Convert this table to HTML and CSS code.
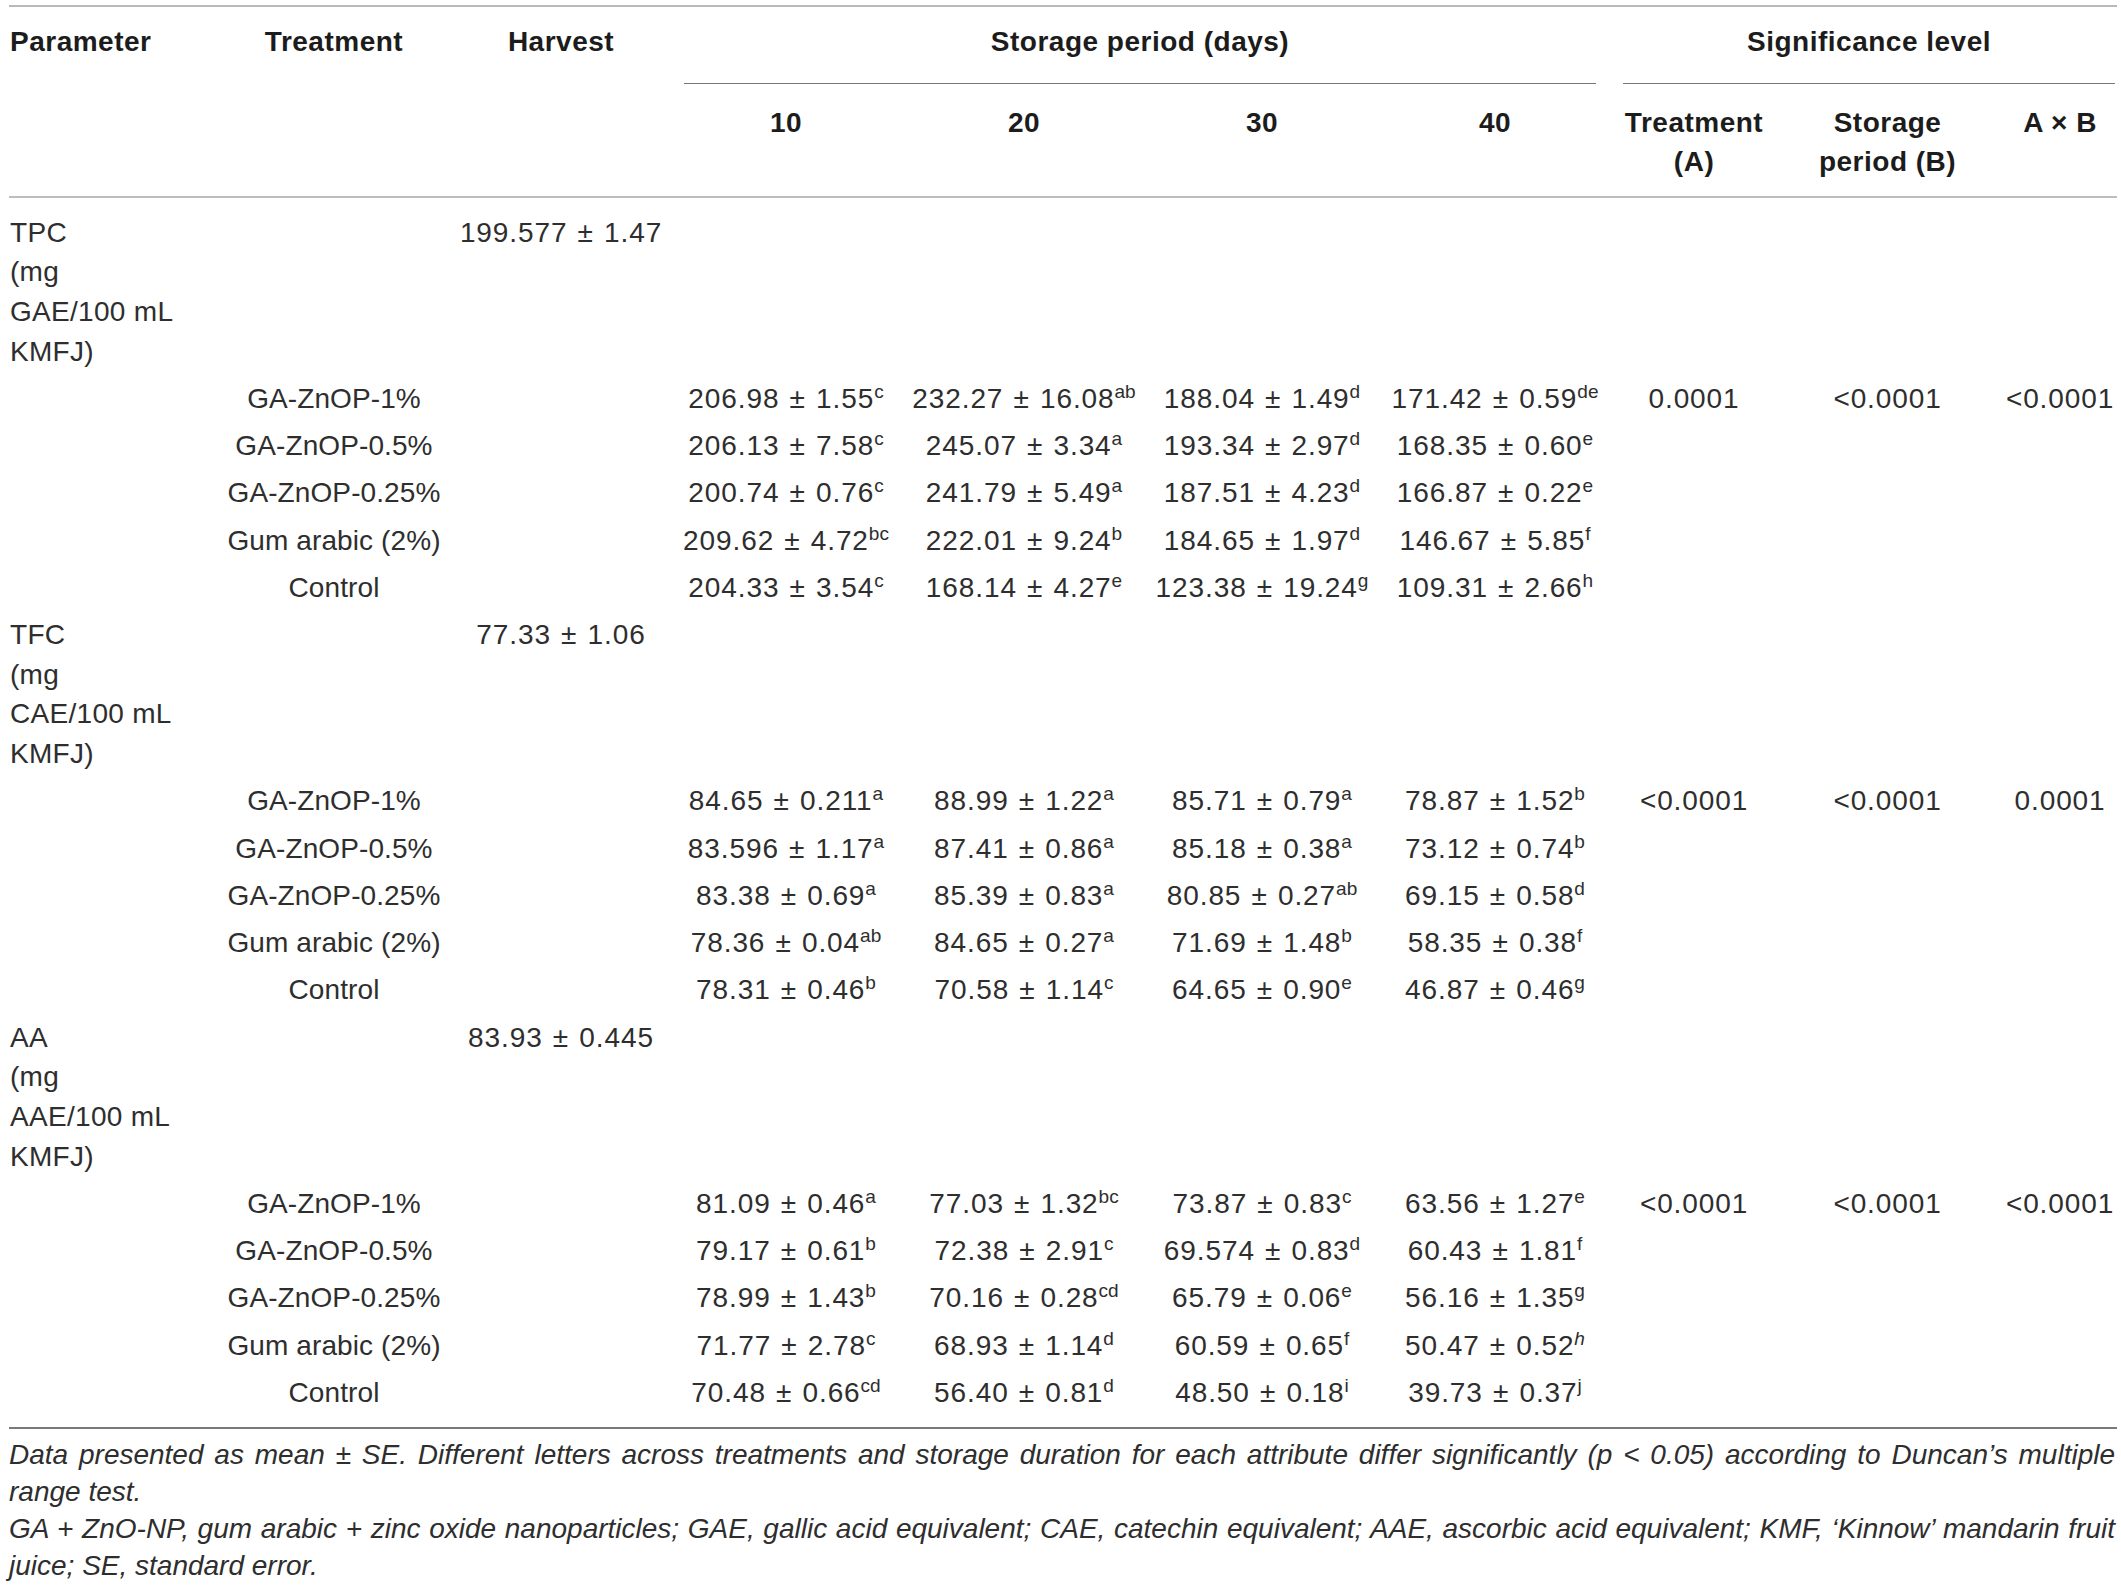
FILE: index.html
```html
<!DOCTYPE html>
<html lang="en">
<head>
    <meta charset="UTF-8">
    <meta name="viewport" content="width=device-width, initial-scale=1.0">
    <title>Phenolics, flavonoids and ascorbic acid during storage</title>
    <link rel="stylesheet" href="styles.css">
</head>
<body>
    <div class="wrap">
        <table class="data">
            <colgroup>
                <col class="c-param">
                <col class="c-treat">
                <col class="c-harvest">
                <col class="c-d10">
                <col class="c-d20">
                <col class="c-d30">
                <col class="c-d40">
                <col class="c-sa">
                <col class="c-sb">
                <col class="c-sab">
            </colgroup>
            <thead>
                <tr class="head-top">
                    <th rowspan="2" class="rs left">Parameter</th>
                    <th rowspan="2" class="rs">Treatment</th>
                    <th rowspan="2" class="rs">Harvest</th>
                    <th colspan="4" class="group"><div class="group-label storage">Storage period (days)</div></th>
                    <th colspan="3" class="group"><div class="group-label sig">Significance level</div></th>
                </tr>
                <tr class="head-sub">
                    <th>10</th>
                    <th>20</th>
                    <th>30</th>
                    <th>40</th>
                    <th>Treatment<br>(A)</th>
                    <th>Storage<br>period (B)</th>
                    <th>A &times; B</th>
                </tr>
            </thead>
            <tbody>
                <!-- TPC -->
                <tr>
                    <td class="param">TPC<br>(mg<br>GAE/100 mL<br>KMFJ)</td>
                    <td></td>
                    <td>199.577 &plusmn; 1.47</td>
                    <td></td><td></td><td></td><td></td><td></td><td></td><td></td>
                </tr>
                <tr>
                    <td></td>
                    <td class="treat">GA-ZnOP-1%</td>
                    <td></td>
                    <td>206.98 &plusmn; 1.55<sup>c</sup></td>
                    <td>232.27 &plusmn; 16.08<sup>ab</sup></td>
                    <td>188.04 &plusmn; 1.49<sup>d</sup></td>
                    <td>171.42 &plusmn; 0.59<sup>de</sup></td>
                    <td>0.0001</td>
                    <td>&lt;0.0001</td>
                    <td>&lt;0.0001</td>
                </tr>
                <tr>
                    <td></td>
                    <td class="treat">GA-ZnOP-0.5%</td>
                    <td></td>
                    <td>206.13 &plusmn; 7.58<sup>c</sup></td>
                    <td>245.07 &plusmn; 3.34<sup>a</sup></td>
                    <td>193.34 &plusmn; 2.97<sup>d</sup></td>
                    <td>168.35 &plusmn; 0.60<sup>e</sup></td>
                    <td></td><td></td><td></td>
                </tr>
                <tr>
                    <td></td>
                    <td class="treat">GA-ZnOP-0.25%</td>
                    <td></td>
                    <td>200.74 &plusmn; 0.76<sup>c</sup></td>
                    <td>241.79 &plusmn; 5.49<sup>a</sup></td>
                    <td>187.51 &plusmn; 4.23<sup>d</sup></td>
                    <td>166.87 &plusmn; 0.22<sup>e</sup></td>
                    <td></td><td></td><td></td>
                </tr>
                <tr>
                    <td></td>
                    <td class="treat">Gum arabic (2%)</td>
                    <td></td>
                    <td>209.62 &plusmn; 4.72<sup>bc</sup></td>
                    <td>222.01 &plusmn; 9.24<sup>b</sup></td>
                    <td>184.65 &plusmn; 1.97<sup>d</sup></td>
                    <td>146.67 &plusmn; 5.85<sup>f</sup></td>
                    <td></td><td></td><td></td>
                </tr>
                <tr>
                    <td></td>
                    <td class="treat">Control</td>
                    <td></td>
                    <td>204.33 &plusmn; 3.54<sup>c</sup></td>
                    <td>168.14 &plusmn; 4.27<sup>e</sup></td>
                    <td>123.38 &plusmn; 19.24<sup>g</sup></td>
                    <td>109.31 &plusmn; 2.66<sup>h</sup></td>
                    <td></td><td></td><td></td>
                </tr>

                <!-- TFC -->
                <tr>
                    <td class="param">TFC<br>(mg<br>CAE/100 mL<br>KMFJ)</td>
                    <td></td>
                    <td>77.33 &plusmn; 1.06</td>
                    <td></td><td></td><td></td><td></td><td></td><td></td><td></td>
                </tr>
                <tr>
                    <td></td>
                    <td class="treat">GA-ZnOP-1%</td>
                    <td></td>
                    <td>84.65 &plusmn; 0.211<sup>a</sup></td>
                    <td>88.99 &plusmn; 1.22<sup>a</sup></td>
                    <td>85.71 &plusmn; 0.79<sup>a</sup></td>
                    <td>78.87 &plusmn; 1.52<sup>b</sup></td>
                    <td>&lt;0.0001</td>
                    <td>&lt;0.0001</td>
                    <td>0.0001</td>
                </tr>
                <tr>
                    <td></td>
                    <td class="treat">GA-ZnOP-0.5%</td>
                    <td></td>
                    <td>83.596 &plusmn; 1.17<sup>a</sup></td>
                    <td>87.41 &plusmn; 0.86<sup>a</sup></td>
                    <td>85.18 &plusmn; 0.38<sup>a</sup></td>
                    <td>73.12 &plusmn; 0.74<sup>b</sup></td>
                    <td></td><td></td><td></td>
                </tr>
                <tr>
                    <td></td>
                    <td class="treat">GA-ZnOP-0.25%</td>
                    <td></td>
                    <td>83.38 &plusmn; 0.69<sup>a</sup></td>
                    <td>85.39 &plusmn; 0.83<sup>a</sup></td>
                    <td>80.85 &plusmn; 0.27<sup>ab</sup></td>
                    <td>69.15 &plusmn; 0.58<sup>d</sup></td>
                    <td></td><td></td><td></td>
                </tr>
                <tr>
                    <td></td>
                    <td class="treat">Gum arabic (2%)</td>
                    <td></td>
                    <td>78.36 &plusmn; 0.04<sup>ab</sup></td>
                    <td>84.65 &plusmn; 0.27<sup>a</sup></td>
                    <td>71.69 &plusmn; 1.48<sup>b</sup></td>
                    <td>58.35 &plusmn; 0.38<sup>f</sup></td>
                    <td></td><td></td><td></td>
                </tr>
                <tr>
                    <td></td>
                    <td class="treat">Control</td>
                    <td></td>
                    <td>78.31 &plusmn; 0.46<sup>b</sup></td>
                    <td>70.58 &plusmn; 1.14<sup>c</sup></td>
                    <td>64.65 &plusmn; 0.90<sup>e</sup></td>
                    <td>46.87 &plusmn; 0.46<sup>g</sup></td>
                    <td></td><td></td><td></td>
                </tr>

                <!-- AA -->
                <tr>
                    <td class="param">AA<br>(mg<br>AAE/100 mL<br>KMFJ)</td>
                    <td></td>
                    <td>83.93 &plusmn; 0.445</td>
                    <td></td><td></td><td></td><td></td><td></td><td></td><td></td>
                </tr>
                <tr>
                    <td></td>
                    <td class="treat">GA-ZnOP-1%</td>
                    <td></td>
                    <td>81.09 &plusmn; 0.46<sup>a</sup></td>
                    <td>77.03 &plusmn; 1.32<sup>bc</sup></td>
                    <td>73.87 &plusmn; 0.83<sup>c</sup></td>
                    <td>63.56 &plusmn; 1.27<sup>e</sup></td>
                    <td>&lt;0.0001</td>
                    <td>&lt;0.0001</td>
                    <td>&lt;0.0001</td>
                </tr>
                <tr>
                    <td></td>
                    <td class="treat">GA-ZnOP-0.5%</td>
                    <td></td>
                    <td>79.17 &plusmn; 0.61<sup>b</sup></td>
                    <td>72.38 &plusmn; 2.91<sup>c</sup></td>
                    <td>69.574 &plusmn; 0.83<sup>d</sup></td>
                    <td>60.43 &plusmn; 1.81<sup>f</sup></td>
                    <td></td><td></td><td></td>
                </tr>
                <tr>
                    <td></td>
                    <td class="treat">GA-ZnOP-0.25%</td>
                    <td></td>
                    <td>78.99 &plusmn; 1.43<sup>b</sup></td>
                    <td>70.16 &plusmn; 0.28<sup>cd</sup></td>
                    <td>65.79 &plusmn; 0.06<sup>e</sup></td>
                    <td>56.16 &plusmn; 1.35<sup>g</sup></td>
                    <td></td><td></td><td></td>
                </tr>
                <tr>
                    <td></td>
                    <td class="treat">Gum arabic (2%)</td>
                    <td></td>
                    <td>71.77 &plusmn; 2.78<sup>c</sup></td>
                    <td>68.93 &plusmn; 1.14<sup>d</sup></td>
                    <td>60.59 &plusmn; 0.65<sup>f</sup></td>
                    <td>50.47 &plusmn; 0.52<sup><i>h</i></sup></td>
                    <td></td><td></td><td></td>
                </tr>
                <tr>
                    <td></td>
                    <td class="treat">Control</td>
                    <td></td>
                    <td>70.48 &plusmn; 0.66<sup>cd</sup></td>
                    <td>56.40 &plusmn; 0.81<sup>d</sup></td>
                    <td>48.50 &plusmn; 0.18<sup>i</sup></td>
                    <td>39.73 &plusmn; 0.37<sup>j</sup></td>
                    <td></td><td></td><td></td>
                </tr>
            </tbody>
        </table>

        <div class="notes">
            <p>Data presented as mean &plusmn; SE. Different letters across treatments and storage duration for each attribute differ significantly (p &lt; 0.05) according to Duncan&rsquo;s multiple range test.</p>
            <p>GA + ZnO-NP, gum arabic + zinc oxide nanoparticles; GAE, gallic acid equivalent; CAE, catechin equivalent; AAE, ascorbic acid equivalent; KMF, &lsquo;Kinnow&rsquo; mandarin fruit juice; SE, standard error.</p>
        </div>
    </div>
</body>
</html>
```

FILE: styles.css
```css
body {
    margin: 0;
    font-family: "Liberation Sans", Arial, sans-serif;
    color: #2e2e2e;
    background-color: #fff;
}
.wrap {
    padding: 5px 4px 0 9px;
}
.data {
    width: 2108px;
    table-layout: fixed;
    border-collapse: collapse;
    font-size: 28px;
    line-height: 39.6px;
    border-top: 2px solid #b9b9b9;
}
.c-param { width: 211px; }
.c-treat { width: 228px; }
.c-harvest { width: 226px; }
.c-d10 { width: 224px; }
.c-d20 { width: 252px; }
.c-d30 { width: 224px; }
.c-d40 { width: 242px; }
.c-sa { width: 156px; }
.c-sb { width: 231px; }
.c-sab { width: 114px; }

th {
    font-weight: bold;
    text-align: center;
    vertical-align: top;
    padding: 0;
    color: #1c1c1c;
    letter-spacing: 0.5px;
}
th.left {
    text-align: left;
    padding-left: 1px;
}
.head-top th {
    padding-top: 15px;
}
.head-top th.rs {
    border-bottom: 2px solid #bdbdbd;
}
.group-label {
    padding-bottom: 21px;
    border-bottom: 1.5px solid #777;
}
.group-label.storage {
    margin: 0 20px 0 10px;
}
.group-label.sig {
    margin: 0 2px 0 7px;
}
.head-sub th {
    padding: 19px 0 14px;
    border-bottom: 2px solid #bdbdbd;
}

td {
    padding: 4px 0 3.7px;
    text-align: center;
    vertical-align: top;
    white-space: nowrap;
    letter-spacing: 0.9px;
    word-spacing: 1.5px;
}
td.param {
    text-align: left;
    padding-left: 1px;
    letter-spacing: 0.3px;
    word-spacing: 0;
}
td.treat {
    letter-spacing: 0.1px;
    word-spacing: 0;
}
tbody tr:first-child td {
    padding-top: 15px;
}
tbody tr:last-child td {
    padding-bottom: 14px;
    border-bottom: 2px solid #7a7a7a;
}
sup {
    font-size: 0.68em;
    line-height: 0;
    vertical-align: 10px;
    letter-spacing: 0;
}

.notes {
    width: 2106px;
    margin-top: 7px;
    font-size: 28px;
    line-height: 37px;
    font-style: italic;
}
.notes p {
    margin: 0;
    text-align: justify;
}
```
